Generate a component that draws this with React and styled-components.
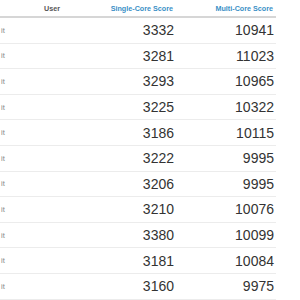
import styled, { createGlobalStyle } from "styled-components";

const GlobalStyle = createGlobalStyle`
  html, body {
    margin: 0;
    padding: 0;
    background: #fff;
  }
  body {
    font-family: "Liberation Sans", Arial, sans-serif;
    overflow: hidden;
  }
`;

const Table = styled.div`
  width: 276px;
  display: flex;
  flex-direction: column;
`;

const Row = styled.div`
  display: grid;
  grid-template-columns: 20px 64px 92px 100px;
  align-items: center;
  height: ${props => (props.$head ? "16px" : "24.6px")};
  border-bottom: ${props => (props.$head ? "2px solid #d6d6d6" : "1px solid #ececec")};
`;

const HeadCell = styled.div`
  font-size: 7.2px;
  font-weight: bold;
  color: ${props => (props.$link ? "#3a8fc6" : "#555")};
  text-align: ${props => props.$align || "right"};
  padding-right: ${props => (props.$align === "center" ? "0" : "3px")};
  white-space: nowrap;
`;

const NameCell = styled.div`
  font-size: 7.5px;
  color: #888;
  padding-left: 1px;
`;

const ScoreCell = styled.div`
  font-size: 14px;
  color: #333;
  text-align: right;
  padding-right: 2px;
`;

const results = [
  [3332, 10941],
  [3281, 11023],
  [3293, 10965],
  [3225, 10322],
  [3186, 10115],
  [3222, 9995],
  [3206, 9995],
  [3210, 10076],
  [3380, 10099],
  [3181, 10084],
  [3160, 9975],
];

export default function App() {
  return (
    <>
      <GlobalStyle />
      <Table>
        <Row $head>
          <HeadCell $align="left" />
          <HeadCell $align="center">User</HeadCell>
          <HeadCell $link>Single-Core Score</HeadCell>
          <HeadCell $link>Multi-Core Score</HeadCell>
        </Row>
        {results.map(([single, multi], i) => (
          <Row key={i}>
            <NameCell>it</NameCell>
            <div />
            <ScoreCell>{single}</ScoreCell>
            <ScoreCell>{multi}</ScoreCell>
          </Row>
        ))}
      </Table>
    </>
  );
}
